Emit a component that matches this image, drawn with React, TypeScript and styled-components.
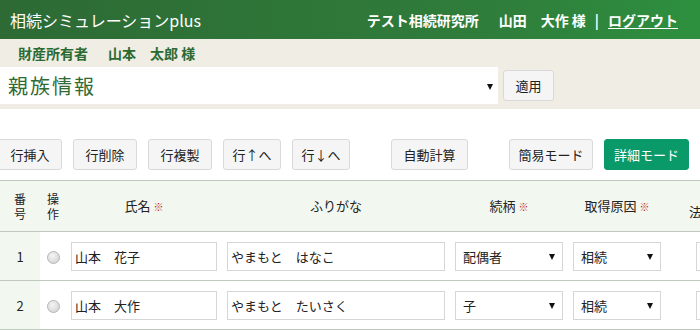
import React from 'react'
import styled, { createGlobalStyle } from 'styled-components'

const GlobalStyle = createGlobalStyle`
	html, body {
		margin: 0;
		padding: 0;
		background: #fff;
		overflow: hidden;
	}
	body {
		font-family: 'Noto Sans CJK JP', 'Noto Sans', sans-serif;
		color: #222;
		width: 700px;
	}
`

const Header = styled.header`
	display: flex;
	align-items: center;
	justify-content: space-between;
	height: 39px;
	padding: 0 22px 0 10px;
	background: linear-gradient(to right, #2d6a34, #2f7d3b 70%, #2d903f);
	color: #fff;
`

const Brand = styled.h1`
	margin: 0;
	font-size: 16px;
	font-weight: 400;
	letter-spacing: 0;
	line-height: 1;
`

const UserNav = styled.nav`
	display: flex;
	align-items: center;
	font-size: 14px;
	font-weight: 700;
	line-height: 1;
`

const Org = styled.span`
	margin-right: 20px;
`

const Sep = styled.span`
	margin: 0 9px;
`

const Logout = styled.a`
	color: #fff;
	text-decoration: underline;
	text-underline-offset: 2px;
`

const Band = styled.section`
	background: #efede4;
	padding-bottom: 5px;
`

const Owner = styled.div`
	display: flex;
	align-items: center;
	gap: 20px;
	height: 28px;
	padding-left: 18px;
	font-size: 14px;
	font-weight: 700;
	color: #2b6a31;
`

const PageRow = styled.div`
	display: flex;
	align-items: center;
	gap: 5px;
`

const PageSelect = styled.div`
	position: relative;
	display: flex;
	align-items: center;
	width: 498px;
	height: 37px;
	padding-left: 8px;
	box-sizing: border-box;
	background: #fff;
	font-size: 20px;
	letter-spacing: 2px;
	color: #2e6a34;
`

const Arrow = styled.span<{ $right: number }>`
	position: absolute;
	right: ${({ $right }) => $right}px;
	top: 50%;
	width: 0;
	height: 0;
	margin-top: -2px;
	border-left: 3.5px solid transparent;
	border-right: 3.5px solid transparent;
	border-top: 6px solid #111;
`

const Button = styled.button<{ $w: number; $primary?: boolean }>`
	width: ${({ $w }) => $w}px;
	height: 31px;
	padding: 0;
	border: 1px solid ${({ $primary }) => ($primary ? '#0a9a6a' : '#d9d9d9')};
	border-radius: 3px;
	background: ${({ $primary }) => ($primary ? '#0a9a6a' : '#f5f5f5')};
	color: ${({ $primary }) => ($primary ? '#fff' : '#222')};
	font-family: inherit;
	font-size: 13px;
	line-height: 1;
	cursor: pointer;
`

const Toolbar = styled.div`
	display: flex;
	gap: 41px;
	margin: 30px 0 0 -2px;
`

const ButtonGroup = styled.div`
	display: flex;
	gap: 11px;
`

const Table = styled.table`
	margin-top: 10px;
	width: 920px;
	border-collapse: collapse;
	table-layout: fixed;
	border-top: 1px solid #bfc9bd;
`

const Th = styled.th<{ $align?: string }>`
	height: 50px;
	padding: 0;
	background: #f2f7f0;
	border-bottom: 1px solid #bfc9bd;
	font-size: 13px;
	font-weight: 400;
	line-height: 14px;
	text-align: ${({ $align }) => $align || 'center'};
	vertical-align: middle;
	white-space: nowrap;
`

const Stack = styled.span`
	display: flex;
	flex-direction: column;
	align-items: center;
	font-size: 12px;
	line-height: 15px;
`

const Required = styled.span`
	margin-left: 3px;
	font-size: 10px;
	color: #c0302a;
`

const Lower = styled.span`
	display: inline-block;
	padding: 12px 0 0 23px;
`

const Td = styled.td<{ $shaded?: boolean }>`
	height: 48px;
	padding: 0 5px;
	border-bottom: 1px solid #bfc9bd;
	background: ${({ $shaded }) => ($shaded ? '#f2f7f0' : '#fff')};
	font-size: 13px;
	text-align: center;
	vertical-align: middle;
`

const Radio = styled.span`
	display: inline-block;
	width: 11px;
	height: 11px;
	border: 1px solid #b5b5b5;
	border-radius: 50%;
	background: radial-gradient(circle at 40% 35%, #f4f4f4, #cfcfcf);
	vertical-align: middle;
`

const TextInput = styled.input<{ $offset?: number }>`
	display: block;
	width: 100%;
	height: 29px;
	margin-left: ${({ $offset }) => $offset || 0}px;
	padding: 0 3px;
	box-sizing: border-box;
	border: 1px solid #d6d6d6;
	border-radius: 0;
	font-family: inherit;
	font-size: 13px;
	color: #222;
	outline: none;
`

const SelectWrap = styled.div<{ $w?: number }>`
	position: relative;
	width: ${({ $w }) => ($w ? `${$w}px` : '100%')};
	height: 29px;
	box-sizing: border-box;
	border: 1px solid #d6d6d6;
	background: #fff;
`

const NativeSelect = styled.select`
	width: 100%;
	height: 100%;
	padding: 0 0 0 7px;
	border: none;
	background: transparent;
	appearance: none;
	font-family: inherit;
	font-size: 13px;
	color: #222;
	outline: none;
`

type Person = { no: number; name: string; kana: string; rel: string; cause: string }

const people: Person[] = [
	{ no: 1, name: '山本　花子', kana: 'やまもと　はなこ', rel: '配偶者', cause: '相続' },
	{ no: 2, name: '山本　大作', kana: 'やまもと　たいさく', rel: '子', cause: '相続' },
]

const Select = ({ value, w }: { value: string; w?: number }) => (
	<SelectWrap $w={w}>
		<NativeSelect defaultValue={value}>
			<option>{value}</option>
		</NativeSelect>
		<Arrow $right={7} />
	</SelectWrap>
)

const App = () => {
	return (
		<>
			<GlobalStyle />
			<Header>
				<Brand>相続シミュレーションplus</Brand>
				<UserNav>
					<Org>テスト相続研究所</Org>
					<span>山田　大作 様</span>
					<Sep>|</Sep>
					<Logout>ログアウト</Logout>
				</UserNav>
			</Header>
			<Band>
				<Owner>
					<span>財産所有者</span>
					<span>山本　太郎 様</span>
				</Owner>
				<PageRow>
					<PageSelect>
						親族情報
						<Arrow $right={5} />
					</PageSelect>
					<Button $w={51}>適用</Button>
				</PageRow>
			</Band>
			<Toolbar>
				<ButtonGroup>
					<Button $w={64}>行挿入</Button>
					<Button $w={64}>行削除</Button>
					<Button $w={64}>行複製</Button>
					<Button $w={58}>行↑へ</Button>
					<Button $w={58}>行↓へ</Button>
				</ButtonGroup>
				<ButtonGroup>
					<Button $w={77}>自動計算</Button>
				</ButtonGroup>
				<ButtonGroup>
					<Button $w={84}>簡易モード</Button>
					<Button $w={85} $primary>
						詳細モード
					</Button>
				</ButtonGroup>
			</Toolbar>
			<Table>
				<colgroup>
					<col style={{ width: 40 }} />
					<col style={{ width: 26 }} />
					<col style={{ width: 156 }} />
					<col style={{ width: 228 }} />
					<col style={{ width: 118 }} />
					<col style={{ width: 98 }} />
					<col style={{ width: 254 }} />
				</colgroup>
				<thead>
					<tr>
						<Th>
							<Stack>
								<span>番</span>
								<span>号</span>
							</Stack>
						</Th>
						<Th>
							<Stack>
								<span>操</span>
								<span>作</span>
							</Stack>
						</Th>
						<Th>
							氏名<Required>※</Required>
						</Th>
						<Th>ふりがな</Th>
						<Th>
							続柄<Required>※</Required>
						</Th>
						<Th>
							取得原因<Required>※</Required>
						</Th>
						<Th $align="left">
							<Lower>法定相続分</Lower>
						</Th>
					</tr>
				</thead>
				<tbody>
					{people.map((p) => (
						<tr key={p.no}>
							<Td $shaded>{p.no}</Td>
							<Td>
								<Radio />
							</Td>
							<Td>
								<TextInput defaultValue={p.name} autoFocus={p.no === 1} />
							</Td>
							<Td>
								<TextInput defaultValue={p.kana} />
							</Td>
							<Td>
								<Select value={p.rel} />
							</Td>
							<Td>
								<Select value={p.cause} w={88} />
							</Td>
							<Td>
								<TextInput $offset={25} defaultValue="" />
							</Td>
						</tr>
					))}
				</tbody>
			</Table>
		</>
	)
}

export default App
